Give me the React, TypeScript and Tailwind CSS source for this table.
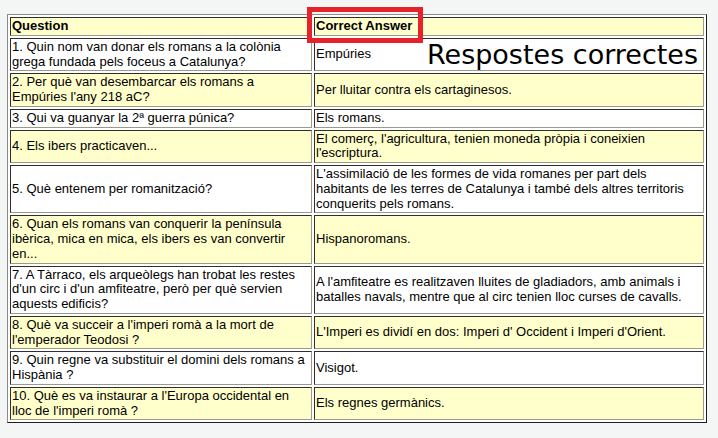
const rows: { q: string[]; a: string[] }[] = [
  {
    q: ["1. Quin nom van donar els romans a la colònia", "grega fundada pels foceus a Catalunya?"],
    a: ["Empúries"],
  },
  {
    q: ["2. Per què van desembarcar els romans a", "Empúries l'any 218 aC?"],
    a: ["Per lluitar contra els cartaginesos."],
  },
  { q: ["3. Qui va guanyar la 2ª guerra púnica?"], a: ["Els romans."] },
  {
    q: ["4. Els ibers practicaven..."],
    a: ["El comerç, l'agricultura, tenien moneda pròpia i coneixien", "l'escriptura."],
  },
  {
    q: ["5. Què entenem per romanització?"],
    a: [
      "L'assimilació de les formes de vida romanes per part dels",
      "habitants de les terres de Catalunya i també dels altres territoris",
      "conquerits pels romans.",
    ],
  },
  {
    q: ["6. Quan els romans van conquerir la península", "ibèrica, mica en mica, els ibers es van convertir", "en..."],
    a: ["Hispanoromans."],
  },
  {
    q: [
      "7. A Tàrraco, els arqueòlegs han trobat les restes",
      "d'un circ i d'un amfiteatre, però per què servien",
      "aquests edificis?",
    ],
    a: [
      "A l'amfiteatre es realitzaven lluites de gladiadors, amb animals i",
      "batalles navals, mentre que al circ tenien lloc curses de cavalls.",
    ],
  },
  {
    q: ["8. Què va succeir a l'imperi romà a la mort de", "l'emperador Teodosi ?"],
    a: ["L'Imperi es dividí en dos: Imperi d' Occident i Imperi d'Orient."],
  },
  {
    q: ["9. Quin regne va substituir el domini dels romans a", "Hispània ?"],
    a: ["Visigot."],
  },
  {
    q: ["10. Què es va instaurar a l'Europa occidental en", "lloc de l'imperi romà ?"],
    a: ["Els regnes germànics."],
  },
];

const cell =
  "border border-t-[#2e2e2e] border-l-[#2e2e2e] border-b-[#9a9a8c] border-r-[#9a9a8c] px-[1px] py-[1px] align-middle";

function Lines({ lines }: { lines: string[] }) {
  return (
    <>
      {lines.map((l, i) => (
        <span key={i} className="block whitespace-nowrap">
          {l}
        </span>
      ))}
    </>
  );
}

export default function App() {
  return (
    <div className="relative h-[438px] w-[718px] overflow-hidden bg-[#f4f6f6] font-['Liberation_Sans',Arial,sans-serif] text-[13px] leading-[14.75px] text-black">
      <div className="pl-[7px] pt-[14px]">
        <table className="w-[700px] border-separate border-spacing-[2px] border border-t-[#8a8a8a] border-l-[#8a8a8a] border-b-[#1e1e1e] border-r-[#1e1e1e] bg-white">
          <tbody>
            <tr className="bg-[#ffffcc]">
              <td className={`${cell} w-[302px] font-bold`}>Question</td>
              <td className={`${cell} font-bold`}>Correct Answer</td>
            </tr>
            {rows.map((r, i) => (
              <tr key={i} className={i % 2 === 0 ? "bg-white" : "bg-[#ffffcc]"}>
                <td className={cell}>
                  <Lines lines={r.q} />
                </td>
                <td className={cell}>
                  {i === 0 ? (
                    <div className="flex items-center justify-between">
                      <span>Empúries</span>
                      <span className="pr-[4px] font-['DejaVu_Sans',sans-serif] text-[27px] leading-[29px]">
                        Respostes correctes
                      </span>
                    </div>
                  ) : (
                    <Lines lines={r.a} />
                  )}
                </td>
              </tr>
            ))}
          </tbody>
        </table>
      </div>
      {/* highlight box round the answer header */}
      <div className="absolute left-[307px] top-[7px] h-[36px] w-[116px] border-[5px] border-[#e8222b]" />
    </div>
  );
}
